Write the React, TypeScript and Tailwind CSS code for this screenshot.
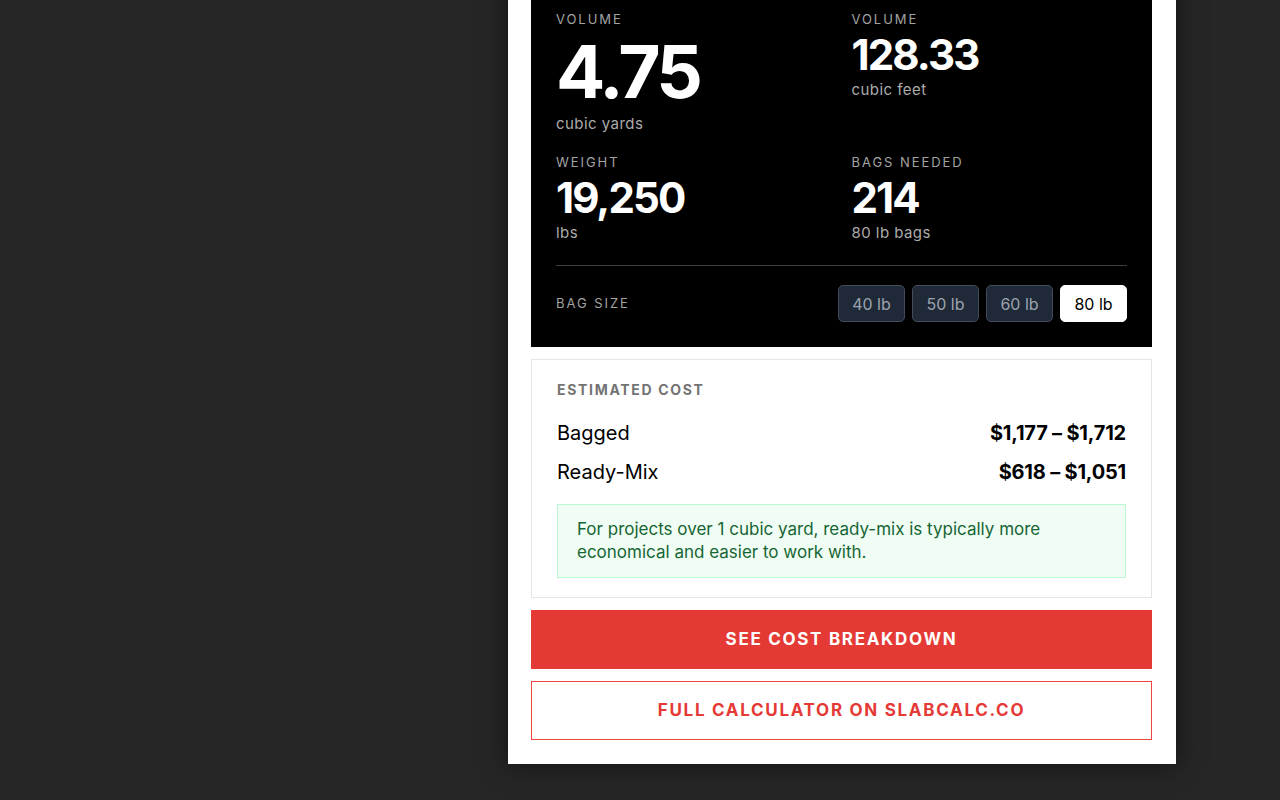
import React from 'react';

const stats = [
  { label: 'VOLUME', value: '4.75', unit: 'cubic yards', big: true },
  { label: 'VOLUME', value: '128.33', unit: 'cubic feet' },
  { label: 'WEIGHT', value: '19,250', unit: 'lbs' },
  { label: 'BAGS NEEDED', value: '214', unit: '80 lb bags' },
];

const bagSizes = ['40 lb', '50 lb', '60 lb', '80 lb'];

function Stat({ stat }) {
  return (
    <div className="flex flex-col">
      <div className="text-[13px] leading-4 tracking-[0.15em] text-[#a3a3a3]">{stat.label}</div>
      {stat.big ? (
        <div className="mt-[9px] text-[73px] font-bold leading-[72px] tracking-[-0.05em] text-white">
          {stat.value}
        </div>
      ) : (
        <div className="mt-[5px] text-[42px] font-bold leading-[46px] tracking-[-0.045em] text-white">
          {stat.value}
        </div>
      )}
      <div
        className={
          stat.big
            ? 'mt-[6px] text-[15px] leading-5 tracking-[0.03em] text-[#ababab]'
            : 'mt-[2px] text-[15px] leading-5 tracking-[0.03em] text-[#ababab]'
        }
      >
        {stat.unit}
      </div>
    </div>
  );
}

export default function App() {
  const [bag, setBag] = React.useState('80 lb');

  return (
    <div
      className="flex h-[800px] flex-col justify-end overflow-hidden bg-[#262626] pb-[36px]"
      style={{ fontFamily: 'Inter, "Noto Sans", sans-serif' }}
    >
      <div className="ml-[508px] flex w-[668px] flex-col bg-white pb-[24px] pl-[23px] pr-[24px] shadow-[0_0_24px_rgba(0,0,0,0.55)]">
        {/* results */}
        <div className="flex flex-col bg-black px-[25px] pb-[25px] pt-[40px]">
          <div className="grid grid-cols-2 gap-x-5 gap-y-[20px]">
            {stats.map((s, i) => (
              <Stat key={i} stat={s} />
            ))}
          </div>
          <div className="mt-[22px] border-t border-[#3d3d3d]" />
          <div className="mt-[19px] flex items-center justify-between">
            <div className="text-[13px] tracking-[0.15em] text-[#a3a3a3]">BAG SIZE</div>
            <div className="flex gap-[7px]">
              {bagSizes.map((b) => (
                <button
                  key={b}
                  onClick={() => setBag(b)}
                  className={
                    b === bag
                      ? 'h-[37px] w-[67px] rounded-[5px] border border-white bg-white text-[16px] text-black'
                      : 'h-[37px] w-[67px] rounded-[5px] border border-[#434c58] bg-[#1f2937] text-[16px] text-[#9ca3af]'
                  }
                >
                  {b}
                </button>
              ))}
            </div>
          </div>
        </div>

        {/* cost */}
        <div className="mt-[12px] flex flex-col border border-[#e5e5e5] px-[25px] pb-[19px] pt-[20px]">
          <div className="text-[14px] font-bold leading-5 tracking-[0.12em] text-[#737373]">ESTIMATED COST</div>
          <div className="mt-[20px] flex items-center justify-between text-[20px] leading-[26px] text-black">
            <span>Bagged</span>
            <span className="font-bold tracking-[-0.01em]">$1,177 – $1,712</span>
          </div>
          <div className="mt-[13px] flex items-center justify-between text-[20px] leading-[26px] text-black">
            <span>Ready-Mix</span>
            <span className="font-bold tracking-[-0.01em]">$618 – $1,051</span>
          </div>
          <div className="mt-[19px] border border-[#bbf7d0] bg-[#f0fdf4] px-[19px] py-[13px] text-[17px] leading-[23px] text-[#166534]">
            For projects over 1 cubic yard, ready-mix is typically more economical and easier to work with.
          </div>
        </div>

        <button className="mt-[12px] h-[59px] bg-[#e53935] text-[17px] font-bold tracking-[0.1em] text-white">
          SEE COST BREAKDOWN
        </button>
        <button className="mt-[12px] h-[59px] border border-[#ef4444] bg-white text-[17px] font-bold tracking-[0.1em] text-[#e53935]">
          FULL CALCULATOR ON SLABCALC.CO
        </button>
      </div>
    </div>
  );
}
